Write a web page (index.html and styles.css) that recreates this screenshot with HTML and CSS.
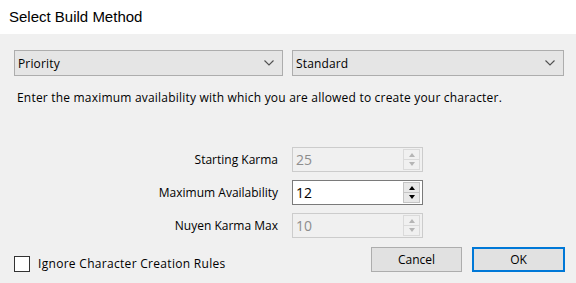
FILE: index.html
```html
<!DOCTYPE html>
<html lang="en">
<head>
  <meta charset="UTF-8"/>
  <title>Select Build Method</title>
  <link rel="stylesheet" href="styles.css">
</head>
<body>

  <!-- Title bar -->
  <div class="titlebar">Select Build Method</div>

  <div class="dialog">
    <!-- Build method pickers -->
    <div class="combos">
      <div class="combo combo-method">
        <span>Priority</span>
        <svg class="chev" width="10" height="6" viewBox="0 0 10 6"><path d="M0.5 0.5 L5 5 L9.5 0.5" fill="none" stroke="#505050" stroke-width="1.1"/></svg>
      </div>
      <div class="combo combo-kind">
        <span>Standard</span>
        <svg class="chev" width="10" height="6" viewBox="0 0 10 6"><path d="M0.5 0.5 L5 5 L9.5 0.5" fill="none" stroke="#505050" stroke-width="1.1"/></svg>
      </div>
    </div>

    <p class="desc">Enter the maximum availability with which you are allowed to create your character.</p>

    <!-- Numeric fields -->
    <div class="fields">
      <label>Starting Karma</label>
      <div class="num disabled">
        <span>25</span>
        <div class="spin">
          <div class="up"></div>
          <div class="down"></div>
        </div>
      </div>

      <label>Maximum Availability</label>
      <div class="num">
        <span>12</span>
        <div class="spin">
          <div class="up"></div>
          <div class="down"></div>
        </div>
      </div>

      <label>Nuyen Karma Max</label>
      <div class="num disabled">
        <span>10</span>
        <div class="spin">
          <div class="up"></div>
          <div class="down"></div>
        </div>
      </div>
    </div>

    <div class="footer">
      <div class="check">
        <div class="box"></div>
        <span>Ignore Character Creation Rules</span>
      </div>
      <div class="buttons">
        <button class="btn">Cancel</button>
        <button class="btn default">OK</button>
      </div>
    </div>
  </div>

</body>
</html>
```

FILE: styles.css
```css
* {
  box-sizing: border-box;
  margin: 0; padding: 0;
}

body {
  width: 576px;
  height: 283px;
  font-family: "Open Sans", "Liberation Sans", sans-serif;
  font-size: 12px;
  letter-spacing: 0.15px;
  color: #000;
  background: #f0f0f0;
  overflow: hidden;
}

.titlebar {
  height: 34px;
  background: #fff;
  padding-left: 9px;
  font-family: "Liberation Sans", Arial, sans-serif;
  font-size: 15px;
  letter-spacing: 0;
  line-height: 33px;
  color: #000;
}

.dialog {
  height: 249px;
  padding: 16px 12px 0 14px;
  display: flex;
  flex-direction: column;
}

.combos {
  display: flex;
  gap: 9px;
}

.combo {
  height: 26px;
  background: #e5e5e5;
  border: 1px solid #adadad;
  display: flex;
  align-items: center;
  justify-content: space-between;
  padding: 0 8px 0 3px;
}

.combo-method { width: 269px; }
.combo-kind { width: 272px; }

.desc {
  margin-top: 13px;
  padding-left: 3px;
  line-height: 17px;
  letter-spacing: 0.2px;
}

.fields {
  margin-top: 41px;
  display: grid;
  grid-template-columns: 264px 131px;
  column-gap: 14px;
  row-gap: 8px;
  align-items: center;
}

.fields label {
  text-align: right;
  letter-spacing: 0;
  color: #000;
}

.num {
  height: 25px;
  border: 1px solid #7a7a7a;
  background: #fff;
  display: flex;
  align-items: center;
  justify-content: space-between;
  padding: 0 2px 0 3px;
  font-size: 14px;
  letter-spacing: 0;
}

.num.disabled {
  border-color: #cccccc;
  background: #f0f0f0;
  color: #8d8d8d;
}

.spin {
  width: 17px;
  height: 21px;
  display: flex;
  flex-direction: column;
}

.spin div {
  flex: 1;
  background: #e8e8e8;
  border: 1px solid #c4c4c4;
  position: relative;
}

.spin .down { border-top: none; }

.spin div::after {
  content: "";
  position: absolute;
  left: 5px;
  top: 3px;
  border-left: 3px solid transparent;
  border-right: 3px solid transparent;
}

.spin .up::after { border-bottom: 4px solid #000; }
.spin .down::after { border-top: 4px solid #000; top: 2px; }

.num.disabled .spin div {
  background: #f0f0f0;
  border-color: #dadada;
}

.num.disabled .spin .up::after { border-bottom-color: #b5b5b5; }
.num.disabled .spin .down::after { border-top-color: #b5b5b5; }

.footer {
  margin-top: 9px;
  display: flex;
  align-items: center;
  justify-content: space-between;
}

.check {
  display: flex;
  align-items: center;
  gap: 8px;
  margin-top: 8px;
  letter-spacing: 0.3px;
}

.box {
  width: 16px;
  height: 16px;
  border: 1px solid #333;
  background: #fff;
}

.buttons {
  display: flex;
  gap: 10px;
}

.btn {
  width: 91px;
  height: 25px;
  background: #e1e1e1;
  border: 1px solid #adadad;
  font-family: inherit;
  font-size: 12px;
  color: #000;
}

.btn.default {
  width: 93px;
  border: 2px solid #0078d7;
  margin-right: -1px;
}
```
